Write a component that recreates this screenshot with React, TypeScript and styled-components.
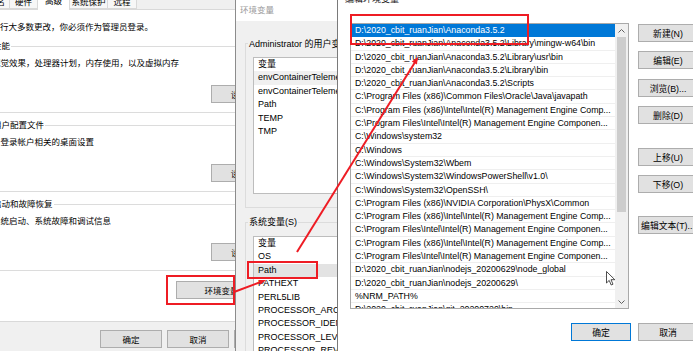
import React from "react";
import styled, { createGlobalStyle } from "styled-components";

const GlobalStyle = createGlobalStyle`
	html, body {
		margin: 0;
		padding: 0;
		overflow: hidden;
		background: #fff;
	}
	* {
		box-sizing: border-box;
	}
`;

const UI_FONT = `"Liberation Sans", "Noto Sans CJK SC", sans-serif`;

const Desktop = styled.div`
	position: relative;
	width: 693px;
	height: 351px;
	overflow: hidden;
	background: #fff;
	font-family: ${UI_FONT};
	color: #000;
`;

/* ---------- shared bits ---------- */

const WinButton = styled.button<{ $w: number; $default?: boolean }>`
	width: ${({ $w }) => $w}px;
	height: 18px;
	flex-shrink: 0;
	padding: 0;
	margin: 0;
	background: #e1e1e1;
	border: 1px solid ${({ $default }) => ($default ? "#0078d7" : "#adadad")};
	font-family: ${UI_FONT};
	font-size: inherit;
	color: #000;
	white-space: nowrap;
	overflow: hidden;
`;

const ChevronSvg = ({ down }: { down?: boolean }) => (
	<svg width="7" height="4" viewBox="0 0 7 4">
		<polyline
			points={down ? "0.5,0.5 3.5,3.5 6.5,0.5" : "0.5,3.5 3.5,0.5 6.5,3.5"}
			fill="none"
			stroke="#606060"
			strokeWidth="1"
		/>
	</svg>
);

/* ---------- system properties (back) ---------- */

const SysWindow = styled.div`
	position: absolute;
	left: -40px;
	top: -6px;
	width: 346px;
	height: 357px;
	background: #f0f0f0;
	display: flex;
	flex-direction: column;
	font-size: 8.5px;
`;

const TabStrip = styled.div`
	display: flex;
	align-items: flex-end;
	height: 15px;
	padding-left: 6px;
	position: relative;
	z-index: 1;
`;

const Tab = styled.div<{ $w: number; $active?: boolean }>`
	width: ${({ $w }) => $w}px;
	height: ${({ $active }) => ($active ? 16 : 14)}px;
	margin-bottom: ${({ $active }) => ($active ? -1 : 0)}px;
	margin-right: -1px;
	background: ${({ $active }) => ($active ? "#fff" : "#f7f7f7")};
	border: 1px solid #d9d9d9;
	border-bottom: ${({ $active }) => ($active ? "none" : "1px solid #d9d9d9")};
	text-align: center;
	line-height: ${({ $active }) => ($active ? 13 : 12)}px;
	white-space: nowrap;
`;

const SysPanel = styled.div`
	margin: 0 6px;
	height: 313px;
	flex-shrink: 0;
	background: #fff;
	border: 1px solid #d9d9d9;
	padding: 11px 10px 0 19px;
	display: flex;
	flex-direction: column;
`;

const IntroText = styled.div`
	margin-left: -3px;
	line-height: 12px;
	white-space: nowrap;
`;

const Group = styled.fieldset`
	margin: ${({ $first }: { $first?: boolean }) => ($first ? 7 : 6)}px 0 0;
	padding: 5px 2px 9px 5px;
	border: 1px solid #dcdcdc;
	min-width: 0;
`;

const GroupLabel = styled.legend`
	padding: 0 1px;
	line-height: 12px;
	white-space: nowrap;
`;

const GroupText = styled.div`
	line-height: 12px;
	white-space: nowrap;
`;

const GroupActions = styled.div`
	display: flex;
	justify-content: flex-end;
	margin-top: 16px;
`;

const EnvButtonRow = styled.div`
	display: flex;
	justify-content: flex-end;
	margin-top: 10px;
	padding-right: 3px;
`;

const SysFooter = styled.div`
	display: flex;
	justify-content: flex-end;
	gap: 5px;
	padding: 8px 10px 0 0;
`;

/* ---------- environment variables (middle) ---------- */

const EnvWindow = styled.div`
	position: absolute;
	left: 235px;
	top: 0;
	width: 440px;
	height: 351px;
	background: #f0f0f0;
	border-left: 1px solid #8c8c8c;
	display: flex;
	flex-direction: column;
	font-size: 9px;
`;

const EnvTitle = styled.div`
	height: 21px;
	flex-shrink: 0;
	background: #fff;
	color: #9a9a9a;
	padding-left: 4px;
	line-height: 21px;
	font-size: 8.5px;
`;

const EnvBody = styled.div`
	padding: 0 0 0 9px;
	display: flex;
	flex-direction: column;
`;

const EnvGroup = styled.fieldset<{ $top: number; $pt: number }>`
	margin: ${({ $top }) => $top}px 0 0;
	padding: ${({ $pt }) => $pt}px 10px 13px 7px;
	border: 1px solid #dcdcdc;
	min-width: 0;
`;

const EnvLabel = styled.legend`
	margin-left: -5px;
	padding: 0 1px;
	line-height: 12px;
	white-space: nowrap;
`;

const VarList = styled.div<{ $h: number }>`
	height: ${({ $h }) => $h}px;
	background: #fff;
	border: 1px solid #bdbdbd;
	overflow: hidden;
`;

const VarRow = styled.div<{ $hl?: string }>`
	height: 13.4px;
	line-height: 13.4px;
	padding-left: 4px;
	background: ${({ $hl }) => $hl ?? "transparent"};
	white-space: nowrap;
`;

/* ---------- edit environment variable (front) ---------- */

const EditWindow = styled.div`
	position: absolute;
	left: 337px;
	top: -12px;
	width: 370px;
	height: 363px;
	background: #fff;
	border-left: 1px solid #7a7a7a;
	display: flex;
	flex-direction: column;
	font-size: 8.8px;
`;

const EditTitle = styled.div`
	height: 22px;
	flex-shrink: 0;
	line-height: 22px;
	padding-left: 7px;
	font-size: 9px;
	color: #222;
`;

const EditBody = styled.div`
	padding: 13px 0 0 12px;
	display: grid;
	grid-template-columns: 279px 60px;
	column-gap: 9px;
	align-items: start;
`;

const PathList = styled.div`
	height: 286px;
	border: 1px solid #a9a9a9;
	display: flex;
	background: #fff;
`;

const PathRows = styled.div`
	flex: 1;
	min-width: 0;
	overflow: hidden;
`;

const PathRow = styled.div<{ $selected?: boolean }>`
	height: 13.3px;
	line-height: 13px;
	padding-left: 4px;
	border-bottom: 1px solid ${({ $selected }) => ($selected ? "#0078d7" : "#efefef")};
	background: ${({ $selected }) => ($selected ? "#0078d7" : "#fff")};
	color: ${({ $selected }) => ($selected ? "#fff" : "#000")};
	white-space: nowrap;
	overflow: hidden;
`;

const ScrollBar = styled.div`
	width: 13px;
	background: #f0f0f0;
	display: flex;
	flex-direction: column;
`;

const ScrollArrow = styled.div`
	height: 13px;
	display: flex;
	align-items: center;
	justify-content: center;
`;

const ScrollTrack = styled.div`
	flex: 1;
	padding: 0 2px;
`;

const ScrollThumb = styled.div`
	height: 175px;
	background: #cdcdcd;
`;

const SideButtons = styled.div`
	display: flex;
	flex-direction: column;
`;

const SideButton = styled(WinButton)<{ $mt: number }>`
	margin-top: ${({ $mt }) => $mt}px;
`;

const EditFooter = styled.div`
	grid-column: 1 / span 2;
	display: flex;
	justify-content: flex-end;
	gap: 7px;
	margin-top: 14px;
`;

const Annotations = styled.svg`
	position: absolute;
	left: 0;
	top: 0;
	pointer-events: none;
`;

/* ---------- data ---------- */

const USER_VARS = ["envContainerTelemetryApiKey", "envContainerTelemetryUrl", "Path", "TEMP", "TMP"];
const SYS_VARS = [
	"OS",
	"Path",
	"PATHEXT",
	"PERL5LIB",
	"PROCESSOR_ARCHITECTURE",
	"PROCESSOR_IDENTIFIER",
	"PROCESSOR_LEVEL",
	"PROCESSOR_REVISION",
];

const X86_ME = "C:\\Program Files (x86)\\Intel\\Intel(R) Management Engine Comp...";
const ME = "C:\\Program Files\\Intel\\Intel(R) Management Engine Componen...";

const PATHS = [
	"D:\\2020_cbit_ruanJian\\Anaconda3.5.2",
	"D:\\2020_cbit_ruanJian\\Anaconda3.5.2\\Library\\mingw-w64\\bin",
	"D:\\2020_cbit_ruanJian\\Anaconda3.5.2\\Library\\usr\\bin",
	"D:\\2020_cbit_ruanJian\\Anaconda3.5.2\\Library\\bin",
	"D:\\2020_cbit_ruanJian\\Anaconda3.5.2\\Scripts",
	"C:\\Program Files (x86)\\Common Files\\Oracle\\Java\\javapath",
	X86_ME,
	ME,
	"C:\\Windows\\system32",
	"C:\\Windows",
	"C:\\Windows\\System32\\Wbem",
	"C:\\Windows\\System32\\WindowsPowerShell\\v1.0\\",
	"C:\\Windows\\System32\\OpenSSH\\",
	"C:\\Program Files (x86)\\NVIDIA Corporation\\PhysX\\Common",
	X86_ME,
	ME,
	X86_ME,
	ME,
	"D:\\2020_cbit_ruanJian\\nodejs_20200629\\node_global",
	"D:\\2020_cbit_ruanJian\\nodejs_20200629\\",
	"%NRM_PATH%",
	"D:\\2020_cbit_ruanJian\\git_20200720\\bin",
];

const RED = "#ee1c24";

export default function App() {
	return (
		<Desktop>
			<GlobalStyle />

			<SysWindow>
				<TabStrip>
					<Tab $w={44}>计算机名</Tab>
					<Tab $w={29}>硬件</Tab>
					<Tab $w={33} $active>高级</Tab>
					<Tab $w={39}>系统保护</Tab>
					<Tab $w={30}>远程</Tab>
				</TabStrip>
				<SysPanel>
					<IntroText>要进行大多数更改，你必须作为管理员登录。</IntroText>
					<Group $first>
						<GroupLabel>性能</GroupLabel>
						<GroupText>视觉效果，处理器计划，内存使用，以及虚拟内存</GroupText>
						<GroupActions>
							<WinButton $w={75}>设置(S)...</WinButton>
						</GroupActions>
					</Group>
					<Group>
						<GroupLabel>用户配置文件</GroupLabel>
						<GroupText>与登录帐户相关的桌面设置</GroupText>
						<GroupActions>
							<WinButton $w={75}>设置(E)...</WinButton>
						</GroupActions>
					</Group>
					<Group>
						<GroupLabel>启动和故障恢复</GroupLabel>
						<GroupText>系统启动、系统故障和调试信息</GroupText>
						<GroupActions>
							<WinButton $w={75}>设置(T)...</WinButton>
						</GroupActions>
					</Group>
					<EnvButtonRow>
						<WinButton $w={110}>环境变量(N)...</WinButton>
					</EnvButtonRow>
				</SysPanel>
				<SysFooter>
					<WinButton $w={62}>确定</WinButton>
					<WinButton $w={62}>取消</WinButton>
					<WinButton $w={62}>应用(A)</WinButton>
				</SysFooter>
			</SysWindow>

			<EnvWindow>
				<EnvTitle>环境变量</EnvTitle>
				<EnvBody>
					<EnvGroup $top={16.5} $pt={7.5}>
						<EnvLabel>Administrator 的用户变量(U)</EnvLabel>
						<VarList $h={137}>
							<VarRow>变量</VarRow>
							{USER_VARS.map((v, i) => (
								<VarRow key={v} $hl={i === 0 ? "#f0f0f0" : undefined}>{v}</VarRow>
							))}
						</VarList>
					</EnvGroup>
					<EnvGroup $top={8} $pt={8}>
						<EnvLabel>系统变量(S)</EnvLabel>
						<VarList $h={140}>
							<VarRow>变量</VarRow>
							{SYS_VARS.map((v) => (
								<VarRow key={v} $hl={v === "Path" ? "#e3e3e3" : undefined}>{v}</VarRow>
							))}
						</VarList>
					</EnvGroup>
				</EnvBody>
			</EnvWindow>

			<EditWindow>
				<EditTitle>编辑环境变量</EditTitle>
				<EditBody>
					<PathList>
						<PathRows>
							{PATHS.map((p, i) => (
								<PathRow key={i} $selected={i === 0}>{p}</PathRow>
							))}
						</PathRows>
						<ScrollBar>
							<ScrollArrow><ChevronSvg /></ScrollArrow>
							<ScrollTrack><ScrollThumb /></ScrollTrack>
							<ScrollArrow><ChevronSvg down /></ScrollArrow>
						</ScrollBar>
					</PathList>
					<SideButtons>
						<SideButton $w={60} $mt={1}>新建(N)</SideButton>
						<SideButton $w={60} $mt={9}>编辑(E)</SideButton>
						<SideButton $w={60} $mt={10}>浏览(B)...</SideButton>
						<SideButton $w={60} $mt={9}>删除(D)</SideButton>
						<SideButton $w={60} $mt={24}>上移(U)</SideButton>
						<SideButton $w={60} $mt={9}>下移(O)</SideButton>
						<SideButton $w={60} $mt={23}>编辑文本(T)...</SideButton>
					</SideButtons>
					<EditFooter>
						<WinButton $w={60} $default>确定</WinButton>
						<WinButton $w={60}>取消</WinButton>
					</EditFooter>
				</EditBody>
			</EditWindow>

			<Annotations width="693" height="351" viewBox="0 0 693 351">
				<rect x="351" y="15" width="177" height="29" fill="none" stroke={RED} strokeWidth="2" />
				<rect x="248" y="262" width="69" height="16" fill="none" stroke={RED} strokeWidth="2" />
				<rect x="167" y="276" width="67" height="28" fill="none" stroke={RED} strokeWidth="2" />
				<line x1="297" y1="252" x2="417" y2="59" stroke={RED} strokeWidth="2" />
				<polygon points="418,57 416.9,64.5 411.8,61.4" fill={RED} />
				<line x1="234" y1="292" x2="262" y2="281.5" stroke={RED} strokeWidth="2" />
				<polygon points="266,280 260.3,284.8 258.6,280.1" fill={RED} />
				<path
					d="M606.5 271.5 L606.5 283 L609.2 280.4 L611.2 285 L613 284.2 L611 279.7 L614.8 279.7 Z"
					fill="#fff"
					stroke="#222"
					strokeWidth="0.8"
					strokeLinejoin="round"
				/>
			</Annotations>
		</Desktop>
	);
}
